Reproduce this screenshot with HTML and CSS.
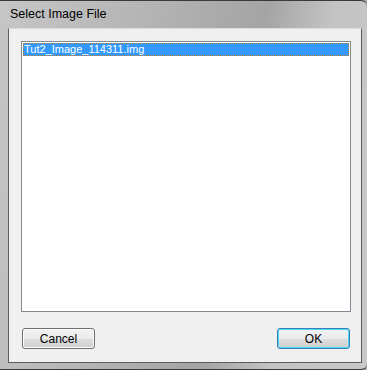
FILE: index.html
```html
<!DOCTYPE html>
<html lang="en">
<head>
    <meta charset="UTF-8">
    <meta name="viewport" content="width=device-width, initial-scale=1.0">
    <title>Select Image File</title>
    <link rel="stylesheet" href="styles.css">
</head>
<body>
    <div class="window">
        <div class="title-bar">Select Image File</div>
        <div class="client">
            <div class="file-list">
                <div class="file-item selected">Tut2_Image_114311.img</div>
            </div>
            <div class="actions">
                <button class="btn">Cancel</button>
                <button class="btn default">OK</button>
            </div>
        </div>
    </div>
</body>
</html>
```

FILE: styles.css
```css
* {
    margin: 0;
    padding: 0;
    box-sizing: border-box;
}

body {
    width: 367px;
    height: 370px;
    overflow: hidden;
    background: #a9a9a9;
    font-family: 'Segoe UI', 'Liberation Sans', Arial, sans-serif;
    font-size: 12px;
}

.window {
    width: 368px;
    height: 370px;
    border: 1px solid #3a3a3a;
    border-left: none;
    border-right-color: #8a8a8a;
    border-radius: 0 7px 7px 0;
    background: linear-gradient(100deg, #c6c6c6 0%, #b4b4b4 35%, #a4a4a4 62%, #c4c4c4 78%, #c8c8c8 100%);
    padding: 0 4px 0 8px;
    display: flex;
    flex-direction: column;
}

.title-bar {
    height: 27px;
    padding: 6px 0 0 2px;
    color: #000;
    font-size: 12.5px;
}

.client {
    width: 354px;
    height: 335px;
    background: #f0f0f0;
    border: 1px solid #5c5c5c;
    border-top-color: #dadada;
    padding: 12px 10px 13px 12px;
    display: flex;
    flex-direction: column;
}

.file-list {
    height: 271px;
    background: #fff;
    border: 1px solid #828790;
    padding: 1px;
}

.file-item {
    height: 13px;
    line-height: 12px;
    padding-left: 1px;
    font-size: 11px;
    color: #000;
    white-space: nowrap;
}

.file-item.selected {
    background: #3399ff;
    color: #fff;
    outline: 1px dotted #c08040;
    outline-offset: -1px;
}

.actions {
    margin-top: 16px;
    display: flex;
    justify-content: space-between;
    padding: 0 1px 0 1px;
}

.btn {
    width: 73px;
    height: 21px;
    border: 1px solid #707070;
    border-radius: 3px;
    background: linear-gradient(#f2f2f2 0%, #ebebeb 50%, #dddddd 51%, #cfcfcf 100%);
    box-shadow: inset 0 0 0 1px #fcfcfc;
    font-family: 'Segoe UI', 'Liberation Sans', Arial, sans-serif;
    font-size: 12px;
    color: #000;
}

.btn.default {
    border-color: #3c7fb1;
    box-shadow: inset 0 0 0 1px #48d8fb;
}
```
